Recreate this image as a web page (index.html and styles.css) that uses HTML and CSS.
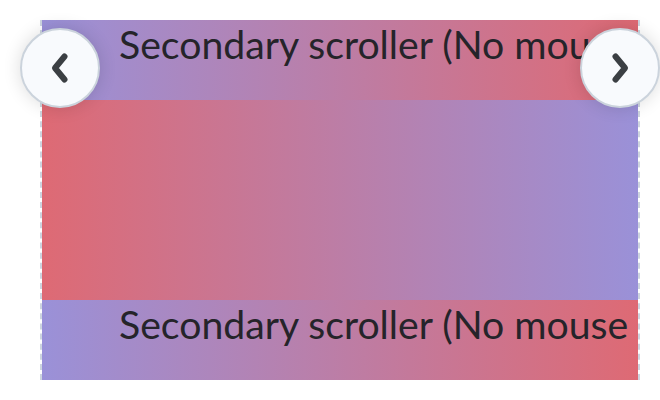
FILE: index.html
```html
<!DOCTYPE html>
<html>
<head>
<meta charset="utf-8">
<link rel="stylesheet" href="styles.css">
</head>
<body>
<div class="frame">
  <div class="viewport">
    <div class="row row-a"><span class="label">Secondary scroller (No mouse wheel)</span></div>
    <div class="row row-b"></div>
    <div class="row row-a"><span class="label">Secondary scroller (No mouse wheel)</span></div>
  </div>
  <button class="nav nav-prev" aria-label="Previous">
    <svg width="28" height="32" viewBox="0 0 28 32"><path d="M18.5 4.5 L9 16 L18.5 27.5" fill="none" stroke="#3b3f43" stroke-width="6" stroke-linecap="round" stroke-linejoin="round"/></svg>
  </button>
  <button class="nav nav-next" aria-label="Next">
    <svg width="28" height="32" viewBox="0 0 28 32"><path d="M9.5 4.5 L19 16 L9.5 27.5" fill="none" stroke="#3b3f43" stroke-width="6" stroke-linecap="round" stroke-linejoin="round"/></svg>
  </button>
</div>
</body>
</html>
```
FILE: styles.css
```css
html, body {
  margin: 0;
  padding: 0;
  background: #ffffff;
}
.frame {
  position: relative;
  margin: 20px 20px 20px 40px;
  width: 596px;
  height: 360px;
  border-left: 2px dashed #cdd5df;
  border-right: 2px dashed #cdd5df;
}
.viewport {
  height: 100%;
  overflow: hidden;
  display: flex;
  flex-direction: column;
}
.row {
  flex: none;
  overflow: hidden;
}
.row-a {
  height: 80px;
  background: linear-gradient(to right, #9a91d8, #de6a74);
}
.row-b {
  height: 200px;
  background: linear-gradient(to right, #de6a74, #9a91d8);
}
.label {
  display: block;
  margin-left: 77px;
  width: 540px;
  height: 47px;
  overflow: hidden;
  font-family: Lato, "Open Sans", sans-serif;
  font-size: 39.2px;
  line-height: 47px;
  color: #25242a;
}
.nav {
  position: absolute;
  top: 8px;
  width: 80px;
  height: 80px;
  border-radius: 50%;
  border: 2px solid #cbd3dc;
  background: #f8fafd;
  box-shadow: 0 0 18px rgba(0, 0, 0, 0.14);
  padding: 0;
  display: flex;
  align-items: center;
  justify-content: center;
  cursor: pointer;
}
.nav-prev { left: -22px; }
.nav-next { right: -22px; }
```
